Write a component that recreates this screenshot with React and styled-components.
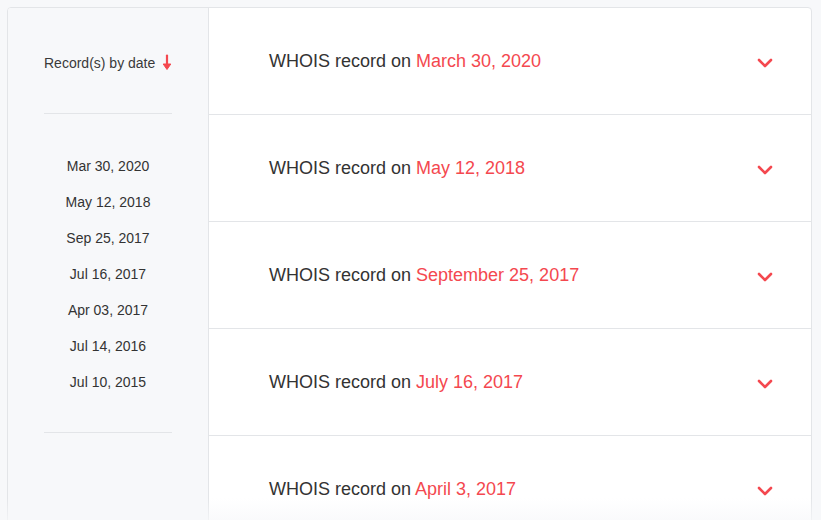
import styled, { createGlobalStyle } from 'styled-components';

const GlobalStyle = createGlobalStyle`
  html, body {
    margin: 0;
    padding: 0;
    background: #f7f8fa;
    font-family: "Liberation Sans", Arial, sans-serif;
    color: #333;
  }
`;

const Page = styled.div`
  padding: 7px 9px 0 7px;
  height: 520px;
  box-sizing: border-box;
  overflow: hidden;
  position: relative;
`;

const Card = styled.div`
  display: flex;
  border: 1px solid #e3e5e8;
  border-radius: 4px;
  background: #fff;
  min-height: 560px;
  overflow: hidden;
`;

const Sidebar = styled.aside`
  width: 200px;
  flex-shrink: 0;
  background: #f7f8fa;
  border-right: 1px solid #e3e5e8;
  display: flex;
  flex-direction: column;
  align-items: center;
`;

const SortHead = styled.div`
  width: 128px;
  height: 106px;
  display: flex;
  align-items: center;
  justify-content: space-between;
  font-size: 14px;
  color: #3a3a3a;
  border-bottom: 1px solid #e3e5e8;
  padding: 4px 0 0;
  box-sizing: border-box;
`;

const DateList = styled.ul`
  list-style: none;
  margin: 0;
  padding: 34px 0 32px;
  width: 128px;
  border-bottom: 1px solid #e3e5e8;
  display: flex;
  flex-direction: column;
`;

const DateItem = styled.li`
  height: 36px;
  line-height: 36px;
  text-align: center;
  font-size: 14px;
  color: #333;
`;

const Records = styled.div`
  flex: 1;
  display: flex;
  flex-direction: column;
`;

const Row = styled.div`
  height: 106px;
  flex-shrink: 0;
  display: flex;
  align-items: center;
  justify-content: space-between;
  padding: 0 38px 0 60px;
  border-bottom: 1px solid #e3e5e8;
  font-size: 18px;
  color: #333;
`;

const Accent = styled.span`
  color: #f4484f;
`;

const Fade = styled.div`
  position: absolute;
  left: 0;
  right: 0;
  bottom: 0;
  height: 22px;
  background: linear-gradient(rgba(247, 248, 250, 0), rgba(247, 248, 250, 0.7));
  pointer-events: none;
`;

const Chevron = () => (
  <svg width="16" height="10" viewBox="0 0 16 10" style={{ marginTop: 4 }}>
    <path d="M2 2 L8 8 L14 2" fill="none" stroke="#f4484f" strokeWidth="2.6" strokeLinecap="round" strokeLinejoin="round" />
  </svg>
);

const ArrowDown = () => (
  <svg width="10" height="17" viewBox="0 0 10 17">
    <path d="M5 1.5 V13" stroke="#f4484f" strokeWidth="2.2" strokeLinecap="round" />
    <path d="M1.2 10 L5 15.5 L8.8 10 Z" fill="#f4484f" stroke="#f4484f" strokeWidth="1" strokeLinejoin="round" />
  </svg>
);

const shortDates = [
  'Mar 30, 2020',
  'May 12, 2018',
  'Sep 25, 2017',
  'Jul 16, 2017',
  'Apr 03, 2017',
  'Jul 14, 2016',
  'Jul 10, 2015',
];

const longDates = [
  'March 30, 2020',
  'May 12, 2018',
  'September 25, 2017',
  'July 16, 2017',
  'April 3, 2017',
];

export default function App() {
  return (
    <Page>
      <GlobalStyle />
      <Card>
        <Sidebar>
          <SortHead>
            <span>Record(s) by date</span>
            <ArrowDown />
          </SortHead>
          <DateList>
            {shortDates.map((d) => (
              <DateItem key={d}>{d}</DateItem>
            ))}
          </DateList>
        </Sidebar>
        <Records>
          {longDates.map((d) => (
            <Row key={d}>
              <span>
                WHOIS record on <Accent>{d}</Accent>
              </span>
              <Chevron />
            </Row>
          ))}
        </Records>
      </Card>
      <Fade />
    </Page>
  );
}
